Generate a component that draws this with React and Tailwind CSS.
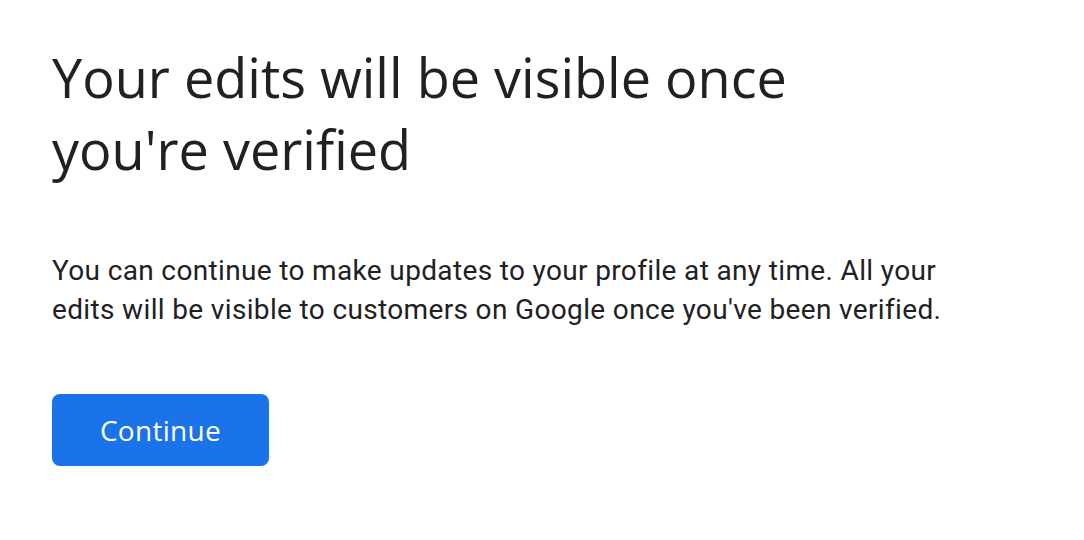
export default function App() {
  return (
    <div className="min-h-screen bg-white pl-[52px] pt-[41px]">
      <h1 className="text-[54px] leading-[72px] text-[#202124] font-normal font-['Open_Sans',sans-serif]">
        Your edits will be visible once
        <br />
        you're verified
      </h1>
      <p className="mt-[66px] text-[28px] leading-[39px] text-[#202124] font-['Roboto',sans-serif] tracking-[0.35px]">
        You can continue to make updates to your profile at any time. All your
        <br />
        edits will be visible to customers on Google once you've been verified.
      </p>
      <button
        type="button"
        className="mt-[65px] w-[217px] h-[72px] rounded-[8px] bg-[#1a73e8] text-white text-[28px] font-medium font-['Open_Sans',sans-serif] tracking-[0.3px]"
      >
        Continue
      </button>
    </div>
  );
}
